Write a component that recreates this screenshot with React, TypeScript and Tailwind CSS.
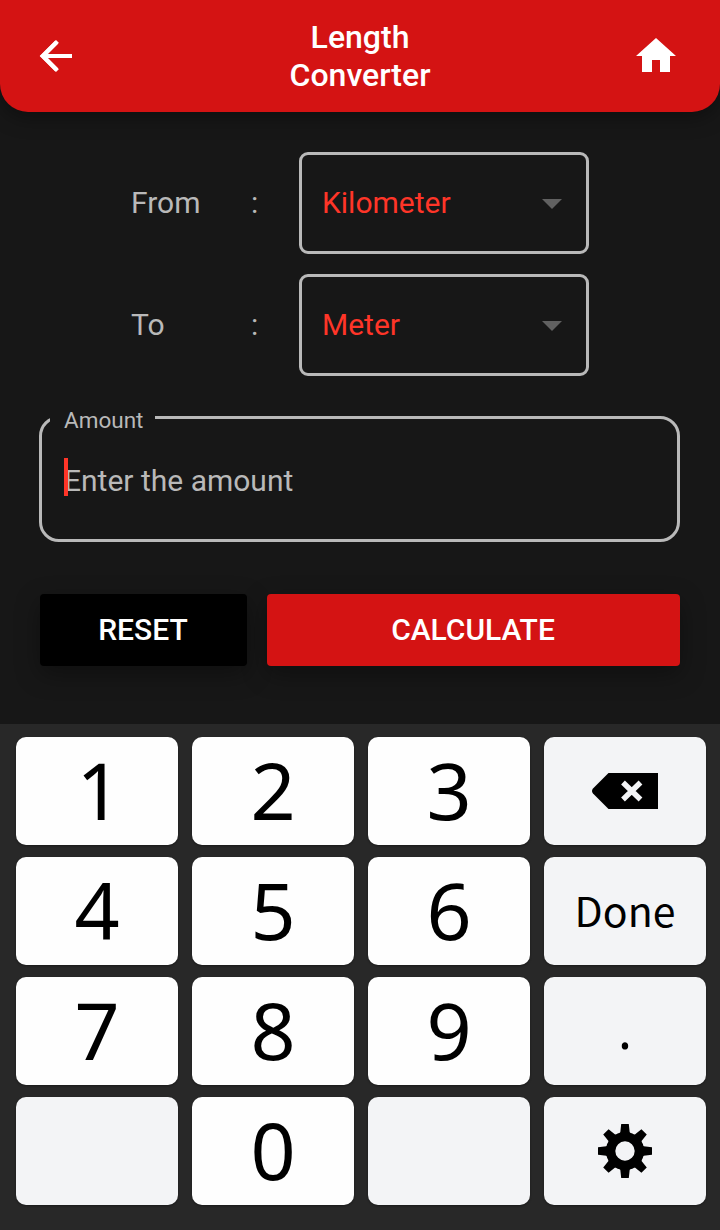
import type { ReactNode } from "react";

function BackIcon() {
  return (
    <svg viewBox="0 0 24 24" className="size-12" fill="currentColor">
      <path d="M20 11H7.83l5.59-5.59L12 4l-8 8 8 8 1.41-1.41L7.83 13H20v-2z" />
      <path d="M12.4 5L5.4 12l7 7" fill="none" stroke="currentColor" strokeWidth="2.2" />
    </svg>
  );
}

function HomeIcon() {
  return (
    <svg viewBox="0 0 24 24" className="size-12" fill="currentColor">
      <path d="M10 20v-6h4v6h5v-8h3L12 3 2 12h3v8z" />
    </svg>
  );
}

function BackspaceIcon() {
  return (
    <svg viewBox="0 0 66 36" className="h-9 w-[66px]">
      <path d="M16.5 0H66V36H16.5L1 20.5Q-1 18 1 15.5Z" fill="#000" />
      <path d="M31 9.5L48.5 26.5M48.5 9.5L31 26.5" stroke="#f3f4f6" strokeWidth="5.4" />
    </svg>
  );
}

const TEETH = [0, 45, 90, 135, 180, 225, 270, 315];

function GearIcon() {
  return (
    <svg viewBox="-27 -27 54 54" className="size-[54px]">
      <circle r="14.4" fill="none" stroke="#000" strokeWidth="9.4" />
      {TEETH.map((a) => (
        <path key={a} d="M-5.8 -17L-4.7 -18.7L-3.8 -27H3.8L4.7 -18.7L5.8 -17Z" transform={`rotate(${a})`} />
      ))}
    </svg>
  );
}

function UnitRow({ label, value }: { label: string; value: string }) {
  return (
    <div className="flex h-[102px] items-center pl-[131px] text-[30px] text-[#b9b9b9]">
      <span className="w-[120px] pb-0.5">{label}</span>
      <span className="w-[48px] pb-0.5">:</span>
      <button className="flex h-[102px] w-[290px] items-center justify-between rounded-[9px] border-3 border-[#b9b9b9] pr-[10px] pl-5 text-[#ff3528]">
        <span className="pb-0.5">{value}</span>
        <svg viewBox="0 0 24 24" className="size-12" fill="#616161">
          <path d="M7 10l5 5 5-5z" />
        </svg>
      </button>
    </div>
  );
}

function Digit({ children }: { children: ReactNode }) {
  return (
    <button className="flex items-center justify-center rounded-[10px] bg-[#fefefe] pb-0.5 text-[79px] leading-[106px] shadow-[0_1px_2px_#1a1a1a]">
      {children}
    </button>
  );
}

function ActionKey({ children }: { children?: ReactNode }) {
  return (
    <button className="flex items-center justify-center rounded-[10px] bg-[#f3f4f6] text-[41px] leading-[100px] shadow-[0_1px_2px_#1a1a1a]">
      {children}
    </button>
  );
}

export default function App() {
  return (
    <main className="flex h-[1230px] w-[720px] flex-col overflow-hidden bg-[#171717] font-['Roboto',sans-serif]">
      <header className="flex h-28 shrink-0 items-center justify-between rounded-b-[28px] bg-[#d41313] pr-10 pl-8 text-white shadow-[0_6px_20px_rgba(0,0,0,0.35)]">
        <BackIcon />
        <h1 className="pl-2 text-center text-[32px] leading-[38px] font-medium">
          Length
          <br />
          Converter
        </h1>
        <HomeIcon />
      </header>

      <section className="flex flex-col gap-5 pt-10">
        <UnitRow label="From" value="Kilometer" />
        <UnitRow label="To" value="Meter" />
      </section>

      <div className="relative mt-10 ml-[39px] flex h-[126px] w-[641px] shrink-0 items-center rounded-[20px] border-3 border-[#b9b9b9] pl-[22px] text-[30px] text-[#b9b9b9]">
        <label className="absolute -top-3 left-2 flex h-7 w-[105px] items-center bg-[#171717] pl-[14px] text-[22.5px]">
          Amount
        </label>
        <span className="pt-0.5">Enter the amount</span>
        <span className="absolute top-[39px] left-[22px] h-[38px] w-1 bg-[#ff3528]" />
      </div>

      <div className="mt-[52px] flex h-[72px] shrink-0 gap-5 px-10 text-[30px] font-medium text-white">
        <button className="w-[207px] rounded-[4px] bg-black pr-px pb-0.5 shadow-[0_8px_24px_rgba(0,0,0,0.35)]">
          RESET
        </button>
        <button className="flex-1 rounded-[4px] bg-[#d41313] pr-px pb-0.5 shadow-[0_8px_24px_rgba(0,0,0,0.35)]">
          CALCULATE
        </button>
      </div>

      <section className="mt-[58px] grid flex-1 grid-cols-[repeat(4,162px)] grid-rows-[repeat(4,108px)] gap-x-[14px] gap-y-3 bg-[#282828] pt-[13px] pl-4 font-['Noto_Sans',sans-serif] text-black">
        <Digit>
          <span className="pl-1">1</span>
        </Digit>
        <Digit>2</Digit>
        <Digit>3</Digit>
        <ActionKey>
          <BackspaceIcon />
        </ActionKey>
        <Digit>4</Digit>
        <Digit>5</Digit>
        <Digit>6</Digit>
        <ActionKey>
          <span className="pb-[5px] font-['Noto_Sans_CJK_SC',sans-serif]">Done</span>
        </ActionKey>
        <Digit>7</Digit>
        <Digit>8</Digit>
        <Digit>9</Digit>
        <ActionKey>
          <span className="pb-1 text-[52px]">.</span>
        </ActionKey>
        <ActionKey />
        <Digit>0</Digit>
        <ActionKey />
        <ActionKey>
          <GearIcon />
        </ActionKey>
      </section>
    </main>
  );
}
